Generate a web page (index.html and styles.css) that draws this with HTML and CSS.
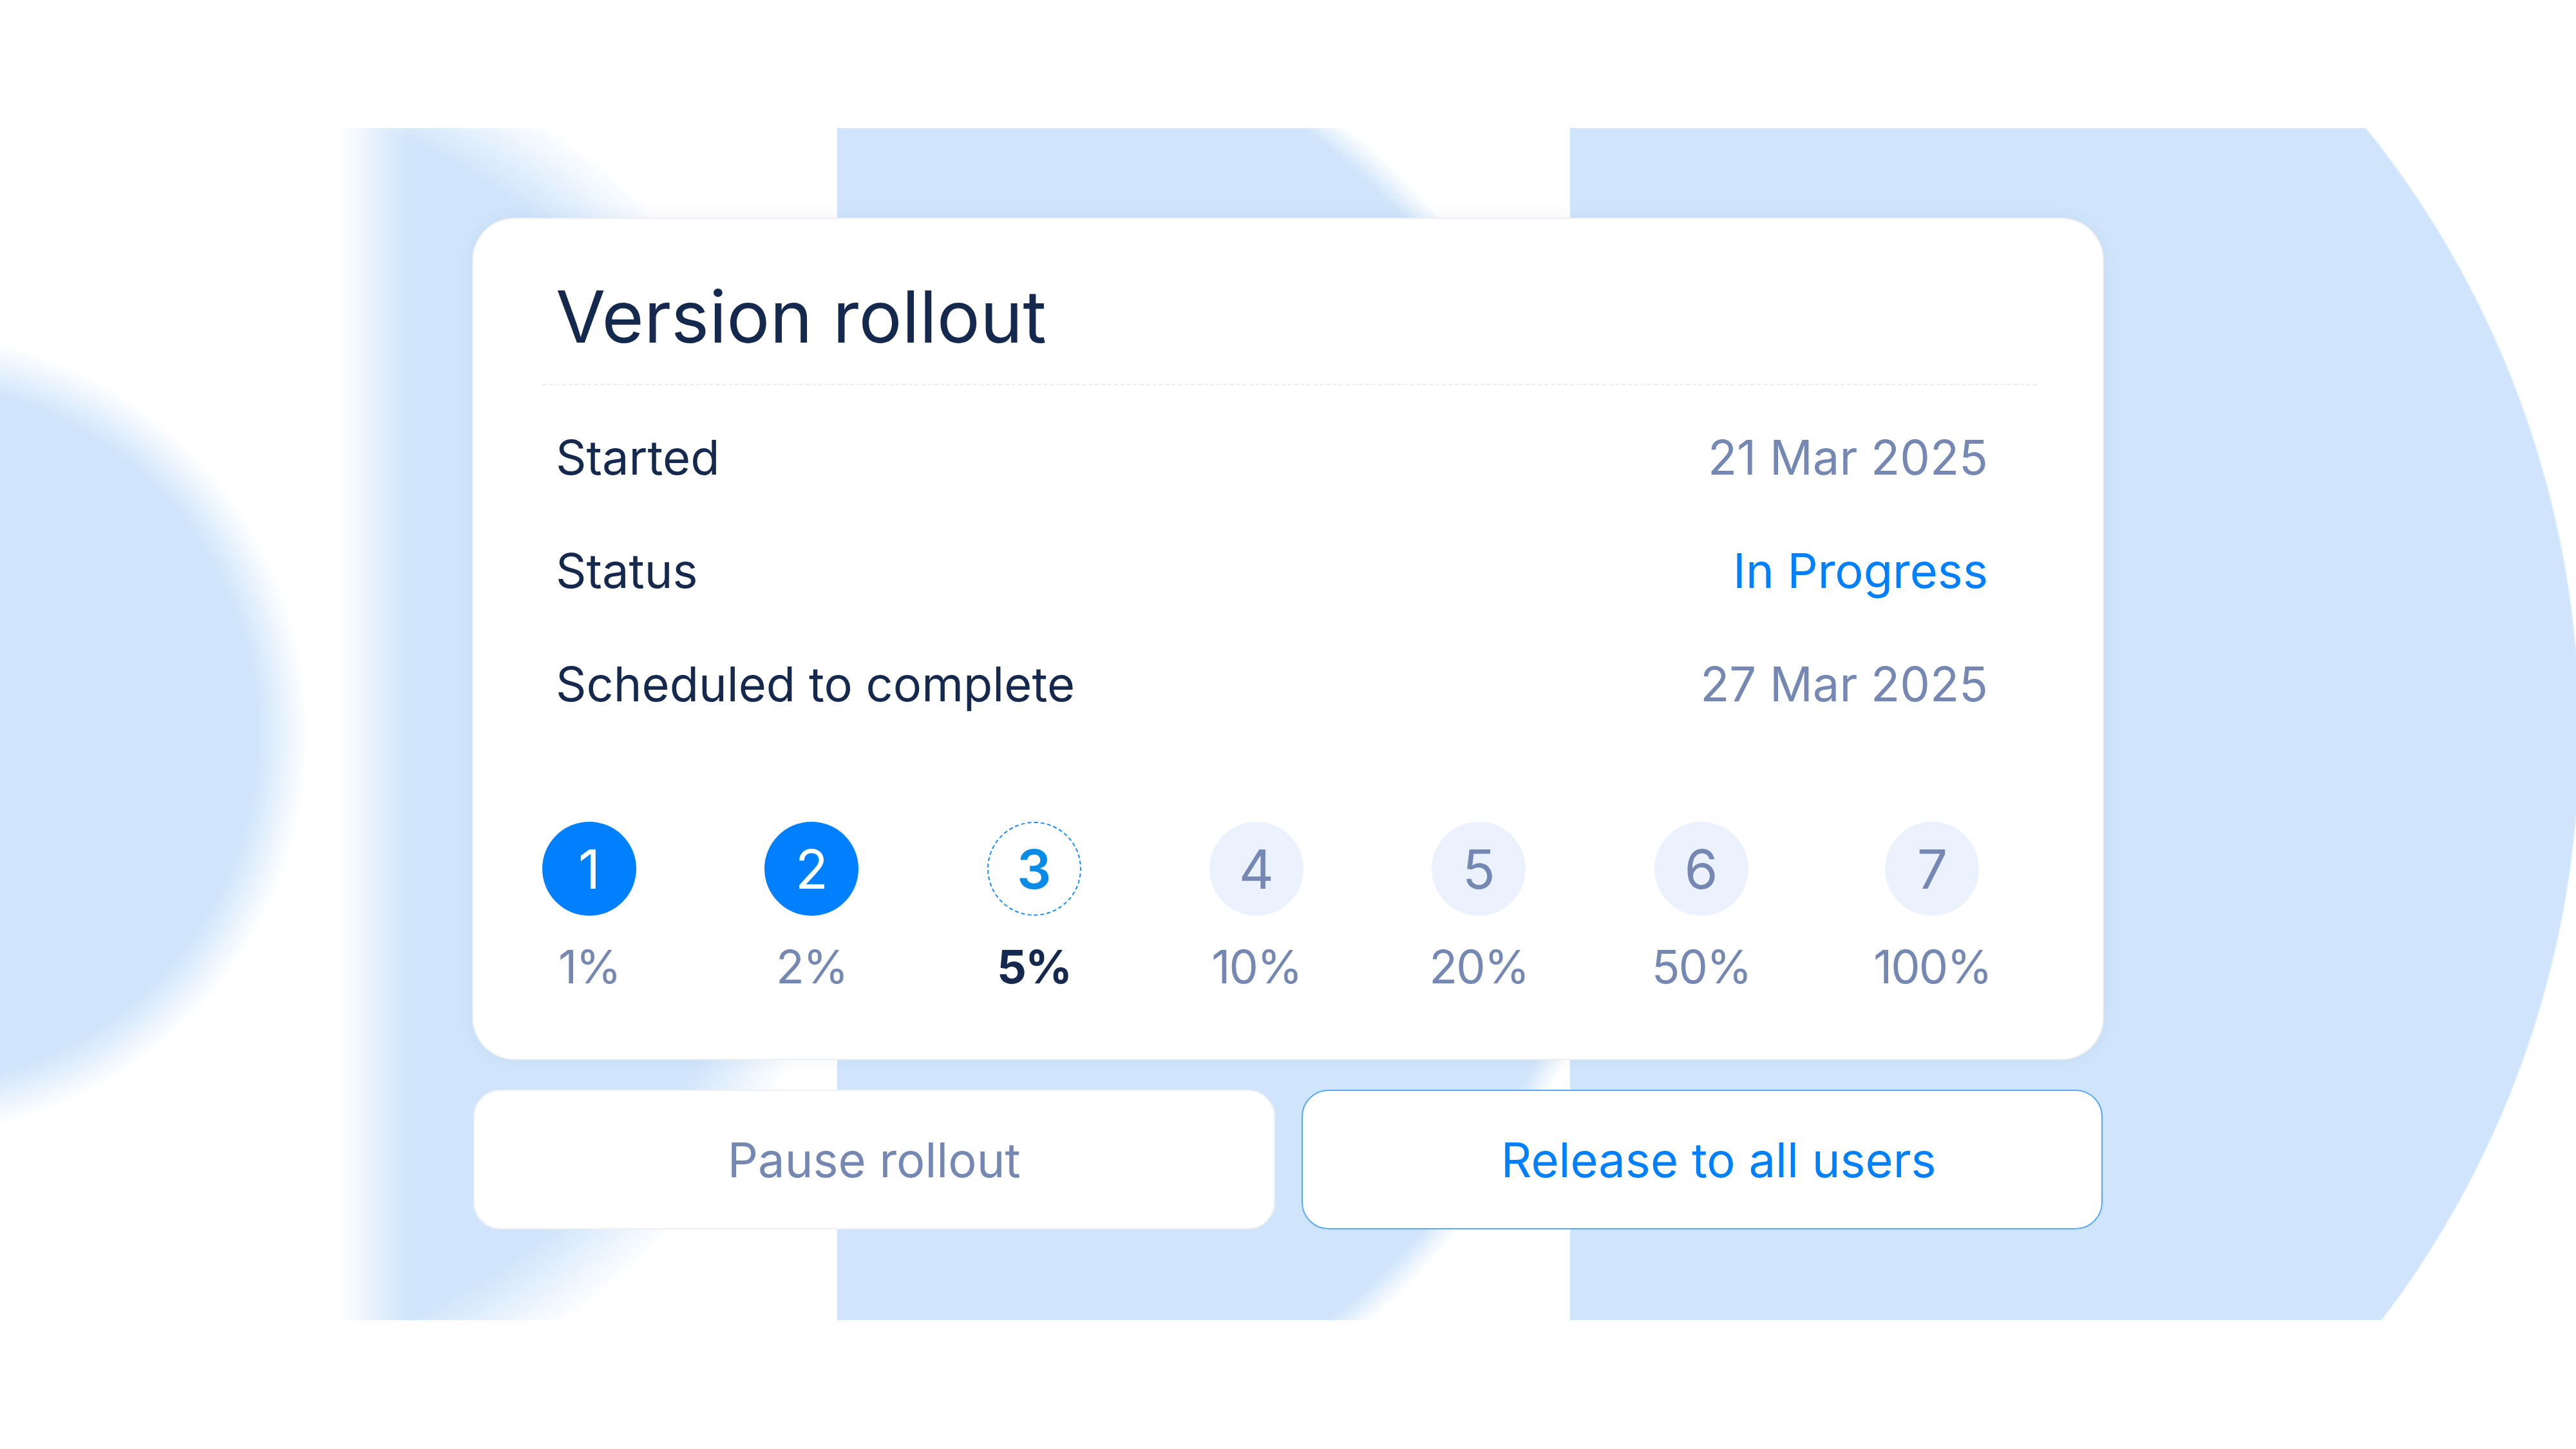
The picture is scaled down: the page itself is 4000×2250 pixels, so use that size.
FILE: index.html
```html
<!DOCTYPE html>
<html>
<head>
    <meta charset="utf-8">
    <title>Version rollout</title>
    <link rel="stylesheet" href="styles.css">
</head>
<body>
    <main class="stage">
        <div class="strip strip-dot"></div>
        <div class="strip strip-disc"></div>
        <div class="strip strip-arc"></div>
        <div class="strip strip-wing"></div>

        <section class="panel">
            <div class="card">
                <h1 class="card-title">Version rollout</h1>
                <div class="divider"></div>
                <div class="info-row">
                    <span class="label">Started</span>
                    <span class="value">21 Mar 2025</span>
                </div>
                <div class="info-row">
                    <span class="label">Status</span>
                    <span class="value value-live">In Progress</span>
                </div>
                <div class="info-row">
                    <span class="label">Scheduled to complete</span>
                    <span class="value">27 Mar 2025</span>
                </div>

                <div class="steps">
                    <div class="step done"><span class="dot">1</span><span class="pct">1%</span></div>
                    <div class="step done"><span class="dot">2</span><span class="pct">2%</span></div>
                    <div class="step current"><span class="dot">3</span><span class="pct">5%</span></div>
                    <div class="step"><span class="dot">4</span><span class="pct">10%</span></div>
                    <div class="step"><span class="dot">5</span><span class="pct">20%</span></div>
                    <div class="step"><span class="dot">6</span><span class="pct">50%</span></div>
                    <div class="step step-last"><span class="dot">7</span><span class="pct">100%</span></div>
                </div>
            </div>

            <div class="actions">
                <button type="button" class="btn btn-pause">Pause rollout</button>
                <button type="button" class="btn btn-release">Release to all users</button>
            </div>
        </section>
    </main>
</body>
</html>
```

FILE: styles.css
```css
body {
    margin: 0;
    background-color: #ffffff;
    font-family: Inter, "Noto Sans", "Liberation Sans", sans-serif;
    color: #14294d;
}

/* backdrop band: four strips, panel sits on top in the same grid cell */
.stage {
    margin-top: 199px;
    height: 1851px;
    display: grid;
    grid-template-columns: 525px 775px 1138px 1fr;
    grid-template-rows: 1851px;
}
.strip {
    grid-row: 1;
}
.strip-dot {
    grid-column: 1;
    background-image: radial-gradient(circle 625px at -146px 941px, #d0e5fb 545px, rgba(208, 229, 251, 0) 625px);
}
.strip-disc {
    grid-column: 2;
    background-image:
        linear-gradient(to right, #ffffff 0, rgba(255, 255, 255, 0) 110px),
        radial-gradient(circle 1130px at -299px 934px, #d0e5fb 1000px, rgba(208, 229, 251, 0) 1130px);
}
.strip-arc {
    grid-column: 3;
    background-image: radial-gradient(circle 1215px at 27px 941px, #d0e5fb 1170px, rgba(208, 229, 251, 0) 1215px);
}
.strip-wing {
    grid-column: 4;
    background-image: radial-gradient(circle 1502px at 67px 941px, #d0e5fb 1499px, rgba(208, 229, 251, 0) 1502px);
}

.panel {
    grid-column: 1 / -1;
    grid-row: 1;
    justify-self: center;
    align-self: center;
    width: 2530px;
}

.card {
    background-color: #ffffff;
    border-radius: 64px;
    padding: 84px 178px 100px 107px;
    box-shadow: 0 0 0 2px #eef0f2, 0 0 30px rgba(40, 70, 120, 0.06);
}
.card-title {
    margin: 0;
    padding-left: 21px;
    font-size: 112px;
    line-height: 134px;
    font-weight: 400;
    color: #14294d;
}
.divider {
    margin: 38px -76px 24px 0;
    border-top: 2px dashed #e9edf2;
}

.info-row {
    display: flex;
    justify-content: space-between;
    height: 176px;
    padding-left: 21px;
    font-size: 74px;
    line-height: 176px;
}
.label {
    color: #14294d;
}
.value {
    color: #7488b3;
}
.value-live {
    color: #0080ff;
}

.steps {
    margin-top: 126px;
    display: flex;
    justify-content: space-between;
}
.step {
    display: flex;
    flex-direction: column;
    align-items: center;
    width: 146px;
}
.step-last {
    width: 173px;
}
.dot {
    flex: none;
    width: 146px;
    height: 146px;
    box-sizing: border-box;
    border-radius: 50%;
    display: flex;
    align-items: center;
    justify-content: center;
    font-size: 84px;
    background-color: #ebf2fe;
    color: #7488b3;
}
.pct {
    margin-top: 36px;
    font-size: 72px;
    line-height: 86px;
    letter-spacing: -2px;
    white-space: nowrap;
    color: #7488b3;
}
.step.done .dot {
    background-color: #0080ff;
    color: #ffffff;
}
.step.current .dot {
    background-color: #ffffff;
    border: 2px dashed #1a8cff;
    color: #0a8be8;
    font-weight: 600;
}
.step.current .pct {
    color: #14294d;
    font-weight: 700;
}

.actions {
    margin-top: 48px;
    display: grid;
    grid-template-columns: 1fr 1fr;
    gap: 41px;
}
.btn {
    height: 217px;
    border-radius: 42px;
    background-color: #ffffff;
    font-family: inherit;
    font-size: 74px;
    padding: 0;
}
.btn-pause {
    border: 2px solid #eef0f3;
    color: #7488b3;
}
.btn-release {
    border: 2px solid #5aa8f8;
    color: #0080ff;
    padding-left: 52px;
}
```
